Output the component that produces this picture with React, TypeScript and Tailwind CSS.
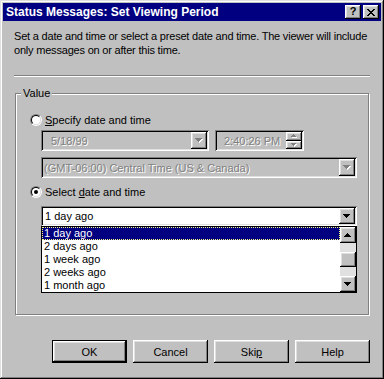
import React from "react";

const raised =
  "bg-[#c0c0c0] shadow-[inset_-1px_-1px_#000,inset_1px_1px_#fff,inset_-2px_-2px_#808080,inset_2px_2px_#dfdfdf]";
const sunken =
  "shadow-[inset_1px_1px_#808080,inset_-1px_-1px_#fff,inset_2px_2px_#000,inset_-2px_-2px_#dfdfdf]";

function Arrow({ dir = "down", disabled = false, w = 7 }: { dir?: "down" | "up"; disabled?: boolean; w?: number }) {
  const h = Math.ceil(w / 2);
  const pts = dir === "down" ? `0,0 ${w},0 ${w / 2},${h}` : `0,${h} ${w},${h} ${w / 2},0`;
  return (
    <svg width={w + 1} height={h + 1} viewBox={`0 0 ${w + 1} ${h + 1}`} shapeRendering="crispEdges">
      {disabled && <polygon points={pts} fill="#fff" transform="translate(1,1)" />}
      <polygon points={pts} fill={disabled ? "#808080" : "#000"} />
    </svg>
  );
}

function Radio({ checked }: { checked?: boolean }) {
  return (
    <div className="w-[12px] h-[12px] rounded-full border border-t-[#808080] border-l-[#808080] border-b-white border-r-white shrink-0">
      <div className="w-full h-full rounded-full border border-t-black border-l-black border-b-[#dfdfdf] border-r-[#dfdfdf] bg-white flex items-center justify-center">
        {checked && <div className="w-[4px] h-[4px] rounded-full bg-black" />}
      </div>
    </div>
  );
}

function Btn({ children, def }: { children: React.ReactNode; def?: boolean }) {
  return def ? (
    <div className="w-[75px] h-[23px] border border-black bg-[#c0c0c0]">
      <div className={`w-full h-full flex items-center justify-center ${raised}`}>{children}</div>
    </div>
  ) : (
    <div className={`w-[75px] h-[23px] flex items-center justify-center ${raised}`}>{children}</div>
  );
}

export default function App() {
  const items = ["1 day ago", "2 days ago", "1 week ago", "2 weeks ago", "1 month ago"];
  return (
    <div className="w-[384px] h-[379px] p-[3px] bg-[#c0c0c0] text-[11px] leading-[14px] text-black font-['Liberation_Sans',Arial,sans-serif] shadow-[inset_-1px_-1px_#000,inset_1px_1px_#dfdfdf,inset_-2px_-2px_#808080,inset_2px_2px_#fff] overflow-hidden">
      {/* Title bar */}
      <div className="h-[18px] bg-[#000080] flex items-center pl-[3px] pr-[2px]">
        <span className="text-white font-bold text-[12px] leading-[14px] whitespace-nowrap">Status Messages: Set Viewing Period</span>
        <div className="ml-auto flex gap-[2px]">
          <div className={`w-[16px] h-[14px] flex items-center justify-center ${raised}`}>
            <span className="font-bold text-[11px] leading-[11px] -mt-[1px]">?</span>
          </div>
          <div className={`w-[16px] h-[14px] flex items-center justify-center ${raised}`}>
            <svg width="8" height="7" viewBox="0 0 8 7" shapeRendering="crispEdges">
              <path d="M0 0h2v1h-2zM6 0h2v1h-2zM1 1h2v1h-2zM5 1h2v1h-2zM2 2h4v1h-4zM3 3h2v1h-2zM2 4h4v1h-4zM1 5h2v1h-2zM5 5h2v1h-2zM0 6h2v1h-2zM6 6h2v1h-2z" fill="#000" />
            </svg>
          </div>
        </div>
      </div>

      <div className="px-[11px]">
        <p className="mt-[8px] whitespace-nowrap tracking-[-0.2px]">
          Set a date and time or select a preset date and time. The viewer will include
          <br />
          only messages on or after this time.
        </p>

        <div className="mt-[18px] border-t border-t-[#808080] border-b border-b-white" />

        <fieldset className="mt-[9px] ml-[1px] mr-[1px] border border-[#808080] shadow-[1px_1px_#fff,inset_1px_1px_#fff] pb-[21px] pl-[14px] pr-[11px]">
          <legend className="ml-[-9px] px-[2px] bg-[#c0c0c0] leading-[14px]">Value</legend>

          <div className="mt-[13px] h-[14px] flex items-center gap-[3px]">
            <Radio />
            <span>
              <span className="underline">S</span>pecify date and time
            </span>
          </div>

          <div className="ml-[11px]">
            <div className="mt-[3px] flex gap-[6px]">
              <div className={`w-[168px] h-[21px] bg-[#c0c0c0] flex items-center p-[2px] ${sunken}`}>
                <span className="flex-1 pl-[8px] text-[#808080] [text-shadow:1px_1px_#fff]">5/18/99</span>
                <div className={`w-[16px] h-full flex items-center justify-center ${raised}`}>
                  <Arrow disabled />
                </div>
              </div>
              <div className={`w-[89px] h-[21px] bg-[#c0c0c0] flex items-center p-[2px] ${sunken}`}>
                <span className="flex-1 pl-[7px] text-[#808080] [text-shadow:1px_1px_#fff]">2:40:26 PM</span>
                <div className="w-[16px] h-full flex flex-col">
                  <div className={`flex-1 flex items-center justify-center ${raised}`}>
                    <Arrow dir="up" disabled w={5} />
                  </div>
                  <div className={`flex-1 flex items-center justify-center ${raised}`}>
                    <Arrow disabled w={5} />
                  </div>
                </div>
              </div>
            </div>

            <div className={`mt-[6px] h-[21px] bg-[#c0c0c0] flex items-center p-[2px] ${sunken}`}>
              <span className="flex-1 pl-[1px] text-[#808080] [text-shadow:1px_1px_#fff] whitespace-nowrap">(GMT-06:00) Central Time (US &amp; Canada)</span>
              <div className={`w-[16px] h-full flex items-center justify-center ${raised}`}>
                <Arrow disabled />
              </div>
            </div>
          </div>

          <div className="mt-[7px] h-[14px] flex items-center gap-[3px]">
            <Radio checked />
            <span>
              Select <span className="underline">d</span>ate and time
            </span>
          </div>

          <div className="ml-[11px]">
            <div className={`mt-[7px] h-[20px] bg-white flex items-center p-[2px] ${sunken}`}>
              <span className="flex-1 pl-[2px]">1 day ago</span>
              <div className={`w-[16px] h-full flex items-center justify-center ${raised}`}>
                <Arrow />
              </div>
            </div>
            <div className="h-[67px] border border-black bg-white flex">
              <div className="flex-1 flex flex-col">
                {items.map((it, i) => (
                  <div
                    key={it}
                    className={`h-[13px] leading-[13px] pl-[2px] ${
                      i === 0 ? "bg-[#000080] text-white outline outline-1 outline-dotted outline-[#ffff80] -outline-offset-1" : ""
                    }`}
                  >
                    {it}
                  </div>
                ))}
              </div>
              <div className="w-[16px] flex flex-col bg-[#e0e0e0]">
                <div className={`h-[16px] flex items-center justify-center ${raised}`}>
                  <Arrow dir="up" />
                </div>
                <div className="h-[9px]" />
                <div className={`h-[15px] ${raised}`} />
                <div className="flex-1" />
                <div className={`h-[16px] flex items-center justify-center ${raised}`}>
                  <Arrow />
                </div>
              </div>
            </div>
          </div>
        </fieldset>

        <div className="mt-[25px] flex justify-end gap-[6px]">
          <Btn def>OK</Btn>
          <Btn>Cancel</Btn>
          <Btn>
            <span>
              Ski<span className="underline">p</span>
            </span>
          </Btn>
          <Btn>Help</Btn>
        </div>
      </div>
    </div>
  );
}
